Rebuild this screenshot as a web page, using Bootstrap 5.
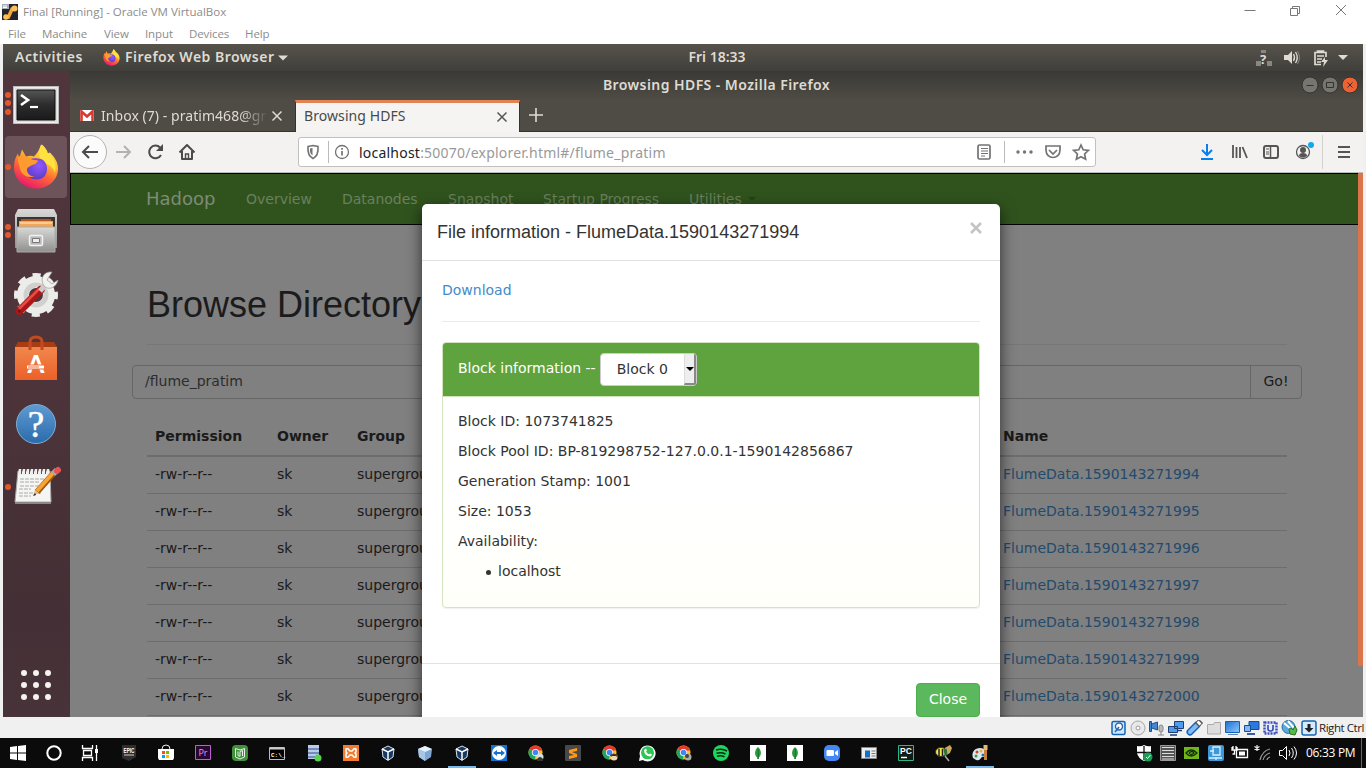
<!DOCTYPE html>
<html lang="en">
<head>
<meta charset="utf-8">
<title>Final [Running] - Oracle VM VirtualBox</title>
<link href="https://cdn.jsdelivr.net/npm/bootstrap@5.3.0/dist/css/bootstrap.min.css" rel="stylesheet">
<script src="https://cdn.jsdelivr.net/npm/bootstrap@5.3.0/dist/js/bootstrap.bundle.min.js" defer></script>
<style>
body{width:1366px;height:768px;overflow:hidden;background:#f0f0f0;font-family:"DejaVu Sans",sans-serif;font-size:14px;line-height:20px;color:#333}
svg{display:block;flex:none}
.seg{font-family:"Open Sans",sans-serif;font-size:12px;line-height:16px;color:#8c8c8c;white-space:nowrap}
.win-title{height:24px;background:#fff;padding-left:2px}
.win-title .seg{font-size:11.5px;letter-spacing:0;margin-left:5px}
.win-menu{height:20px;background:#fff;padding-left:8px}
.win-menu span{width:var(--w);font-size:11.5px;letter-spacing:-.1px}
.vm{margin:0 3px;height:673px;overflow:hidden;background:#808080}
.ub{font-family:"Noto Sans",sans-serif;font-weight:600;color:#dfdbd2;white-space:nowrap}
.topbar{height:27px;background:linear-gradient(#56534b,#403f3b);padding-left:12px;font-size:14px;line-height:18px}
.topbar span{padding-bottom:1px}
.dock{width:67px;height:646px;background:linear-gradient(#50363c,#4e353b 40%,#432f35 85%,#49333a)}
.dock-item{height:64px;width:67px}
.dock-item.on::before{content:"";position:absolute;left:2px;top:1px;width:62px;height:62px;border-radius:4px;background:#6c545a}
.dock-item svg{position:relative}
.ff-title{height:29px;background:linear-gradient(#3a3935,#4f4c45);font-size:14px;letter-spacing:.43px;padding-bottom:2px}
.tabs{height:32px;background:#4f4c45;border-bottom:1px solid #35332f;font-family:"Noto Sans",sans-serif;color:#dfdbd2}
.tab-active{width:225px;height:32px;background:#f5f4f3;border-top:3px solid #e28255;border-left:1px solid #35332f;border-right:1px solid #35332f;color:#494949;padding:0 11px 0 8px;letter-spacing:.08px}
.tab-active span{padding-bottom:2px}
.tab-idle{width:225px;padding-left:10px}
.fade-t{width:169px;white-space:nowrap;letter-spacing:.05px;-webkit-mask-image:linear-gradient(90deg,#000 82%,transparent 99%)}
.toolbar{height:41px;background:#f3f2f1;border-bottom:1px solid #bcbcbc}
.urlbar{width:798px;height:30px;background:#fff;border:1px solid #c2c0bd;border-radius:3px;font-family:"Noto Sans",sans-serif;font-size:14px;letter-spacing:.22px;color:#999}
.page{height:544px;width:1293px;background:#808080;overflow:hidden}
.hd-nav{height:52px;background:#30531e;border:1px solid #000;border-right:0;color:#69805d;padding-left:75px}
.hd-nav .brand{font-size:18px;color:#7e8b77;width:100px}
.wrap{width:1170px;margin-left:62px}
.hd-h1{font-family:"Liberation Sans",sans-serif;font-size:36px;line-height:40px;color:#1b1b1b;margin:60px 15px 0;padding-bottom:19px;border-bottom:1px solid #777;font-weight:400}
.path{height:34px;margin-top:20px;border:1px solid #666;border-radius:4px;color:#2c2c2c;padding-left:12px;line-height:30px}
.path .go{width:51px;border-left:1px solid #666;color:#1b1b1b;text-align:center}
.ftable{margin:17px 15px 0;width:1140px;table-layout:fixed;--bs-table-bg:transparent;--bs-table-color:#1a1a1a;color:#1a1a1a;border-color:#6f6f6f;white-space:nowrap}
.ftable th{height:40px;padding:7px 8px 9px;border-bottom:2px solid #6d6d6d;line-height:20px;color:#1a1a1a}
.ftable td{height:37px;padding:7px 8px 9px;border-bottom:1px solid #6d6d6d;line-height:20px;color:#1a1a1a}
.ftable td:last-child{color:#244a6c}
.sbar{right:0;top:0;width:5px;height:493px;background:#d9744b}
.dlg{left:352px;top:31px;width:578px;height:540px;background:#fff;border-radius:5px 5px 0 0;box-shadow:0 5px 15px rgba(0,0,0,.65)}
.dlg-head{height:57px;border-bottom:1px solid #e1e1e1;padding:0 17px 0 15px;font-family:"Liberation Sans",sans-serif;font-size:18px}
.dlg-body{height:403px;padding:19px 20px 0 20px;border-bottom:1px solid #e1e1e1}
.dlg hr{margin:21px 0 20px;border-top:1px solid #eaeaea;opacity:1}
.panel{border:1px solid #d3e3c0;border-radius:4px;height:266px;box-shadow:0 1px 1px rgba(0,0,0,.06);overflow:hidden;background:linear-gradient(#fff 60%,#fffffa)}
.panel-h{background:#5fa33e;height:54px;padding:10px 0 0 15px;color:#fff;border-bottom:1px solid #cfe3b8}
.panel-h > span{padding-top:5px}
.panel-b{padding:14px 15px}
.panel-b p{margin:0 0 10px}
.dotted::before{content:"";width:5px;height:5px;border-radius:50%;background:#333;margin:2px 7px 0 28px}
.sel{width:97px;height:33px;background:#fff;border:1px solid #ccc;border-radius:4px;color:#333;padding-left:16px}
.sel > span{padding-bottom:2px}
.sel i{width:12px;height:31px;background:#eee;border-right:2px solid #888;border-bottom:2px solid #888;border-left:1px solid #ddd;border-radius:0 2px 2px 0}
.sel i::after{content:"";position:absolute;left:1px;top:13px;border:4px solid transparent;border-top-color:#000;border-bottom:0}
.close-btn{width:64px;height:34px;margin:19px 20px;background:#5cb85c;border:1px solid #4cae4c;border-radius:4px;color:#fff;font-size:14px;line-height:20px;padding:0 0 2px}
.status{height:21px;background:#f0f0f0;padding-left:1110px}
.status .cell{width:19px}
.taskbar{height:30px;background:#0b0b0b}
.taskbar .cell{width:37px;height:30px}
.taskbar .cell.on::after{content:"";position:absolute;bottom:0;left:4px;width:28px;height:2px;background:#76b9ed}
.taskbar .c36{width:36px}
.taskbar .first{margin-left:3px}
</style>
</head>
<body>
<svg width="0" height="0" class="position-absolute">
<defs>
<linearGradient id="ffo" x1=".8" y1="0" x2=".3" y2="1"><stop offset="0" stop-color="#fff44f"/><stop offset=".35" stop-color="#ffbd30"/><stop offset=".6" stop-color="#ff6a35"/><stop offset="1" stop-color="#e9156b"/></linearGradient>
<radialGradient id="ffp" cx=".6" cy=".35" r=".7"><stop offset="0" stop-color="#9059ff"/><stop offset="1" stop-color="#5b3ac0"/></radialGradient>
<linearGradient id="term" x1="0" y1="0" x2="0" y2="1"><stop offset="0" stop-color="#555"/><stop offset=".5" stop-color="#2c2c2c"/><stop offset="1" stop-color="#1a1a1a"/></linearGradient>
<linearGradient id="silver" x1="0" y1="0" x2="0" y2="1"><stop offset="0" stop-color="#d9d9d7"/><stop offset="1" stop-color="#8f8f8d"/></linearGradient>
<linearGradient id="bag" x1="0" y1="0" x2="0" y2="1"><stop offset="0" stop-color="#f0874d"/><stop offset="1" stop-color="#ec6127"/></linearGradient>
<linearGradient id="help" x1="0" y1="0" x2="0" y2="1"><stop offset="0" stop-color="#5d9bd3"/><stop offset="1" stop-color="#2b6bab"/></linearGradient>
<linearGradient id="scr" x1="0" y1="0" x2="1" y2="1"><stop offset="0" stop-color="#1c6fd0"/><stop offset="1" stop-color="#8cc8ff"/></linearGradient>
<symbol id="firefox" viewBox="0 0 46 46">
<path d="M23 45C10 45 1 35 1 24c0-7 2-11 4-14l1 5 3-9 4 7c3-1 6-1 8 0 3-3 5-6 7-12 4 3 6 6 6 9l3-1c5 5 8 10 8 16 0 12-10 20-22 20z" fill="url(#ffo)"/>
<path d="M29 1c3 3 5 5 6 9 6 5 9 11 7 19-3-9-11-8-14-13-3-4-2-9 1-15z" fill="#ffe140"/>
<path d="M13 19c2-3 7-5 12-4 5 0 9 4 9 10 0 7-4 11-10 11-7 0-11-4-11-10z" fill="url(#ffp)"/>
<path d="M5 13c6-1 9 0 14 3l6 1c-1 4-5 4-7 5-2 2-4 1-4 5 1 4 4 6 8 6-8 2-14-2-15-8-1-5-3-7-2-12z" fill="#ff9a2e"/>
</symbol>
<symbol id="chrome" viewBox="0 0 16 16"><circle cx="7.5" cy="7.5" r="7" fill="#fbc116"/><path d="M7.5 7.500 1.4 4A7 7 0 0 1 13.600 4z" fill="#e33b2e"/><path d="M7.500 7.500 1.400 4A7 7 0 0 0 7 14.500z" fill="#1fa463"/><path d="M2 3.500h12v2H4z" fill="#e33b2e"/><circle cx="7.500" cy="7.500" r="3.600" fill="#fff"/><circle cx="7.500" cy="7.500" r="2.800" fill="#4285f4"/></symbol>
<symbol id="cube" viewBox="0 0 16 16"><path d="M8 1l6 3-1 8-5 3.500L3 12 2 4z" fill="#18385f" stroke="#d5e3f2"/><path d="M2 4l6 3 6-3M8 7v8" stroke="#fff" stroke-width="1.500" fill="none"/></symbol>
<symbol id="leaf" viewBox="0 0 16 16"><path fill="#fff" d="M0 0h16v16H0z"/><path d="M8 2c3.500 3 4 8 .8 10.500V14H7.200v-1.500C4 10 4.500 5 8 2z" fill="#2b9a3e"/><path d="M8.300 4v10" stroke="#11682a" stroke-width=".8"/></symbol>
</defs></svg>

<header class="win-title d-flex align-items-center">
<svg width="16" height="16"><path fill="#25252f" d="M0 0h16v16H0z"/><path d="M3.500 13h3l3.500-8h3" stroke="#f4a63b" stroke-width="3.500" fill="none"/><circle cx="12.500" cy="4.500" r="3" fill="#f9c15c"/><circle cx="4" cy="13" r="2.800" fill="#ffbf53"/><path d="M0 0h7v5H0z" fill="#a6b0b9"/><path d="M1 2h4M1 3.500h4" stroke="#fff"/></svg>
<span class="seg">Final [Running] - Oracle VM VirtualBox</span>
<svg class="ms-auto" width="122" height="24" fill="none" stroke="#777"><path d="M0.500 10.500h11M46.500 8.500h7v7h-7zM48.500 8V6.500h7v7H54M92 5l10 10M102 5l-10 10"/></svg>
</header>
<nav class="win-menu d-flex align-items-center"><span class="seg" style="--w:34px">File</span><span class="seg" style="--w:62px">Machine</span><span class="seg" style="--w:41px">View</span><span class="seg" style="--w:44px">Input</span><span class="seg" style="--w:56px">Devices</span><span class="seg">Help</span></nav>

<main class="vm">
<div class="topbar ub d-flex align-items-center position-relative">
<span style="width:88px;letter-spacing:.55px">Activities</span>
<svg width="17" height="17"><use href="#firefox"/></svg>
<span style="letter-spacing:.48px;margin-left:5px">Firefox Web Browser</span>
<svg class="ms-1" width="10" height="6"><path d="M0 .5h10L5 5.500z" fill="#dfdbd2"/></svg>
<span class="position-absolute start-50 translate-middle-x" style="margin-left:34px">Fri 18:33</span>
<svg class="ms-auto" style="margin-right:15px" width="92" height="20"><path d="M5 2h5v3H5zM0 13h5v5H0zM11 13h5v5h-5z" fill="#8a877f"/><text x="4" y="16" font-size="13" font-weight="700" fill="#dfdbd2">?</text><path d="M28 7h4l4-4v13l-4-4h-4z" fill="#dfdbd2"/><path d="M37.500 6q2 3.500 0 7M39.500 4q3.500 5.500 0 11" stroke="#dfdbd2" stroke-width="1.300" fill="none"/><path d="M41.500 3q4 6.500 0 13" stroke="#8a877f" fill="none"/><path d="M65 16.500h-6v-12h2.500V3h6v1.500H70V9M62 4.500h5M61 8h7M61 11h5M61 14h4" stroke="#dfdbd2" stroke-width="1.700" fill="none"/><path d="m69 9-4 5h3l-1 5 5-7h-3z" fill="#dfdbd2"/><path d="M82 7h10l-5 5z" fill="#dfdbd2"/></svg>
</div>
<div class="d-flex">
<aside class="dock d-flex flex-column">
<div class="dock-item"><svg width="67" height="64"><g fill="#e2582b"><circle cx="5" cy="24" r="3"/><circle cx="5" cy="32" r="3"/><circle cx="5" cy="41" r="3"/></g><path d="M10 15h46v38H10z" fill="#bbb"/><path d="M11.500 16.500h43v35h-43z" fill="#ddd" stroke="#eee"/><path d="M14 19h38v30H14z" fill="url(#term)" stroke="#111"/><path d="m18 24 7 5-7 5" fill="none" stroke="#fff" stroke-width="2.600"/><path d="M27 36h8" stroke="#fff" stroke-width="2.200"/></svg></div>
<div class="dock-item on position-relative d-flex"><svg width="67" height="64"><circle cx="5" cy="32" r="3" fill="#e2582b"/><use href="#firefox" x="10" y="8" width="46" height="47"/></svg></div>
<div class="dock-item"><svg width="67" height="64"><g fill="#e2582b"><circle cx="5" cy="28" r="3"/><circle cx="5" cy="36" r="3"/></g><path d="M15 10h36l3 6v33H12V16z" fill="url(#silver)"/><path d="M14 18h38v10H14z" fill="#3a3531"/><path d="M18 20h30v2H18z" fill="#b4551f"/><path d="M16 22h34v6H16z" fill="#f2a659"/><path d="M17 24h32" stroke="#fff0cf"/><path d="M14 28h38v25H14z" fill="url(#silver)" stroke="#aaa"/><rect x="26.500" y="36.500" width="13" height="10" rx="1.500" fill="#bbb" stroke="#f2f2f2" stroke-width="1.500"/><path d="M29.500 39.500h7v4h-7z" fill="#eee" stroke="#777"/></svg></div>
<div class="dock-item"><svg width="67" height="64"><circle cx="33" cy="32" r="13" fill="none" stroke="#ecece9" stroke-width="12"/><circle cx="33" cy="32" r="19.500" fill="none" stroke="#ecece9" stroke-width="5" stroke-dasharray="8 7.315" stroke-dashoffset="4"/><circle cx="33" cy="32" r="10" fill="none" stroke="#d0d0ce" stroke-width="5"/><path d="m16.500 48 21-21" stroke="#a81818" stroke-width="8" stroke-linecap="round"/><path d="m16 46 20-20" stroke="#ea4b43" stroke-width="2.500"/><path d="m37 28 7-8" stroke="#ccc" stroke-width="5"/><path d="M49 9c-7-1-12 5-9 12s13 5 15-4l-6 4-5-4z" fill="#f1f1ee" stroke="#999" stroke-width=".7"/><circle cx="16.500" cy="48" r="1.500" fill="#711"/></svg></div>
<div class="dock-item"><svg width="67" height="64"><path d="m12 20 3-5h36l3 5z" fill="#a83d14"/><path d="M12 20h42v33H12z" fill="url(#bag)"/><path d="M27 23v-8q0-5 6-5t6 5v8" fill="none" stroke="#c34a20" stroke-width="3"/><text x="33" y="46" text-anchor="middle" font-family="Lato" font-size="24" font-weight="900" fill="#fff">A</text><path d="M22 40h22" stroke="#ee6f37" stroke-width="5"/><path d="M24 40h17" stroke="#fff" stroke-width="3"/><path d="M25 40h11" stroke="#ee6f37"/></svg></div>
<div class="dock-item"><svg width="67" height="64"><circle cx="33" cy="33" r="19.500" fill="url(#help)" stroke="#82acd1"/><text x="33" y="46" text-anchor="middle" font-family="Liberation Serif" font-size="37" fill="#fff" stroke="#fff" stroke-width=".5">?</text></svg></div>
<div class="dock-item"><svg width="67" height="64"><circle cx="5" cy="32" r="3" fill="#e2582b"/><path d="M15 16h32l1 31H12z" fill="#f5f5f3" stroke="#aaa"/><path d="M12 47h36v2H12z" fill="#888"/><path d="M17 14v6M21 14v6M25 14v6M29 14v6M33 14v6M37 14v6M41 14v6M45 14v6" stroke="#eee" stroke-width="2.500"/><path d="M18.500 15v4M22.500 15v4M26.500 15v4M30.500 15v4M34.500 15v4M38.500 15v4M42.500 15v4" stroke="#555"/><path d="M17 24h26M17 27h20M17 31h24M16 34h12M16 38h22M16 41h12" stroke="#aaa" stroke-dasharray="4 1"/><path d="m34 37 16-18" stroke="#9d560b" stroke-width="6"/><path d="m34 36 16-18" stroke="#f9a332" stroke-width="4"/><path d="m50 19 4-4" stroke="#aaa" stroke-width="6"/><path d="m54 16 1-1" stroke="#ea5252" stroke-width="6" stroke-linecap="round"/><path d="m30 41 2-6 4 3z" fill="#e6bd88"/><path d="m30 41 2-3 1 2z" fill="#222"/></svg></div>
<svg class="mt-auto" width="67" height="63"><g fill="#f5f2f0"><circle cx="21" cy="19" r="3"/><circle cx="33" cy="19" r="3"/><circle cx="45" cy="19" r="3"/><circle cx="21" cy="31" r="3"/><circle cx="33" cy="31" r="3"/><circle cx="45" cy="31" r="3"/><circle cx="21" cy="43" r="3"/><circle cx="33" cy="43" r="3"/><circle cx="45" cy="43" r="3"/></g></svg>
</aside>

<section>
<div class="ff-title ub d-flex align-items-center justify-content-center position-relative" style="width:1293px"><span>Browsing HDFS - Mozilla Firefox</span>
<svg class="position-absolute end-0 top-0" width="66" height="29" viewBox="-10 0 66 29"><g stroke="#34332f"><circle cx="3" cy="14" r="8" fill="#777570"/><circle cx="23" cy="14" r="8" fill="#777570"/><circle cx="43" cy="14" r="8" fill="#ee6134"/></g><path d="M-.5 14.500h7M19.500 11.500h7v5h-7zM40.500 11.500l5 5M45.500 11.500l-5 5" stroke="#33322f" fill="none"/></svg></div>
<div class="tabs d-flex align-items-center">
<div class="tab-idle d-flex align-items-center"><svg width="14" height="11"><path fill="#fff" d="M0 0h14v11H0z"/><path d="M1.500 11V1.500L7 6.500l5.500-5V11" stroke="#d93a2f" stroke-width="2.600" fill="none"/></svg><span class="fade-t" style="margin-left:7px">Inbox (7) - pratim468@gr</span><svg width="12" height="12" class="ms-auto me-2"><path d="m1.500 1.500 9 9m0-9-9 9" stroke="#dfdbd2" stroke-width="1.500"/></svg><i class="me-1"></i></div>
<div class="tab-active d-flex align-items-center justify-content-between"><span>Browsing HDFS</span><svg width="12" height="12"><path d="m1.500 1.500 9 9m0-9-9 9" stroke="#555" stroke-width="1.500"/></svg></div>
<svg style="margin-left:7px" width="18" height="16"><path d="M9 0v14M2 7h14" stroke="#dfdbd2" stroke-width="1.600"/></svg>
</div>
<div class="toolbar d-flex align-items-center">
<svg width="228" height="40" fill="none" stroke="#4b4b4b" stroke-width="2"><circle cx="20" cy="20" r="16.500" fill="#fbfbfb" stroke="#b5b3b0" stroke-width="1"/><path d="M28 20H13m6-6-6 6 6 6"/><path d="M46 20h14m-6-6 6 6-6 6" stroke="#b2b2b2"/><path d="M91 23a6.300 6.300 0 1 1-1-7.500"/><path d="M93 12v7h-7z" fill="#4b4b4b" stroke="none"/><path d="m109.500 20.500 7.500-7.500 7.500 7.500M112 19v8h10v-8" stroke-linejoin="round"/><path d="M115.500 22h3v5h-3z" stroke-width="1.400"/></svg>
<div class="urlbar d-flex align-items-center">
<svg width="60" height="28" fill="none" stroke="#737373"><path d="M9 8.500q5-1 5-1 0 0 5 1c.5 6-1 10-5 12-4-2-5.500-6-5-12z" stroke-width="1.600"/><path d="M13.500 10v7.500q-3-2-2.500-7z" fill="#737373" stroke="none"/><path d="M29.500 3v22" stroke="#bbb"/><circle cx="43" cy="14" r="6.500" stroke-width="1.300"/><path d="M43 13v4.500M43 10v1.700" stroke-width="1.700"/></svg>
<span class="flex-grow-1" style="padding-top:1px"><span style="color:#222">localhost</span>:50070/explorer.html#/flume_pratim</span>
<svg width="121" height="28" fill="none" stroke="#737373" stroke-width="1.700"><rect x="4" y="7" width="12" height="14" rx="1.500"/><path d="M7 10.500h7M7 13h7M7 15.500h7M7 18h4" stroke-width="1"/><path d="M30.500 3v22" stroke="#bbb" stroke-width="1"/><g fill="#737373" stroke="none"><circle cx="44" cy="14" r="1.700"/><circle cx="50.500" cy="14" r="1.700"/><circle cx="57" cy="14" r="1.700"/></g><path d="M72 8h14v4c0 10-14 10-14 0zM75 12l4 4 4-4"/><path d="m107 7 2.200 4.800 5.200.6-3.800 3.600 1 5.200-4.600-2.500-4.600 2.500 1-5.200-3.800-3.600 5.200-.6z"/></svg>
</div>
<svg class="ms-auto" width="166" height="40" fill="none" stroke="#555" stroke-width="2"><path d="M10 12v11m-5-5 5 5 5-5M4 27h12" stroke="#0a7df0"/><path d="M36 13v13M39.500 15v11M43 15v11M45.500 15l4.500 11" stroke-width="1.800"/><rect x="67" y="14" width="14" height="12" rx="2"/><path d="M73.500 14v12" stroke-width="1.500"/><path d="M69 17h3M69 20h3M69 22h3" stroke-width="1"/><circle cx="106" cy="20" r="6.500" stroke-width="1.300"/><circle cx="106" cy="18" r="3" fill="#555" stroke="none"/><path d="M102 24q0-3 4-3t4 3q-4 3-8 0z" fill="#555" stroke="none"/><circle cx="114" cy="13" r="3" fill="#10a9ed" stroke="none"/><path d="M125.500 3v34" stroke="#d2d1d0" stroke-width="1"/><path d="M141 15h12M141 20h12M141 25h12"/></svg>
</div>

<div class="page position-relative">
<nav class="hd-nav d-flex align-items-center"><span class="brand">Hadoop</span><span style="width:96px">Overview</span><span style="width:106px">Datanodes</span><span style="width:95px">Snapshot</span><span style="width:146px">Startup Progress</span><span>Utilities</span><svg style="margin-left:6px" width="8" height="4"><path d="M0 0h8L4 4z" fill="#23431a"/></svg></nav>
<div class="wrap">
<h1 class="hd-h1">Browse Directory</h1>
<div class="path d-flex justify-content-between"><span>/flume_pratim</span><span class="go">Go!</span></div>
<table class="table ftable">
<colgroup><col style="width:122px"><col style="width:80px"><col style="width:646px"><col></colgroup>
<thead><tr><th>Permission</th><th>Owner</th><th>Group</th><th>Name</th></tr></thead>
<tbody>
<tr><td>-rw-r--r--</td><td>sk</td><td>supergroup</td><td>FlumeData.1590143271994</td></tr>
<tr><td>-rw-r--r--</td><td>sk</td><td>supergroup</td><td>FlumeData.1590143271995</td></tr>
<tr><td>-rw-r--r--</td><td>sk</td><td>supergroup</td><td>FlumeData.1590143271996</td></tr>
<tr><td>-rw-r--r--</td><td>sk</td><td>supergroup</td><td>FlumeData.1590143271997</td></tr>
<tr><td>-rw-r--r--</td><td>sk</td><td>supergroup</td><td>FlumeData.1590143271998</td></tr>
<tr><td>-rw-r--r--</td><td>sk</td><td>supergroup</td><td>FlumeData.1590143271999</td></tr>
<tr><td>-rw-r--r--</td><td>sk</td><td>supergroup</td><td>FlumeData.1590143272000</td></tr>
</tbody></table>
</div>
<div class="sbar position-absolute"></div>
<div class="dlg position-absolute">
<div class="dlg-head d-flex align-items-center justify-content-between"><span>File information - FlumeData.1590143271994</span><svg class="mb-2" width="14" height="14"><path d="m2 2 10 10m0-10L2 12" stroke="#c4c4c4" stroke-width="2.600"/></svg></div>
<div class="dlg-body">
<span class="d-block" style="color:#428bca">Download</span>
<hr>
<div class="panel">
<div class="panel-h d-flex align-items-start"><span>Block information --</span><div class="sel ms-1 d-flex align-items-center justify-content-between"><span>Block 0</span><i class="position-relative"></i></div></div>
<div class="panel-b"><p>Block ID: 1073741825</p><p>Block Pool ID: BP-819298752-127.0.0.1-1590142856867</p><p>Generation Stamp: 1001</p><p>Size: 1053</p><p>Availability:</p><ul class="list-unstyled mb-0"><li class="dotted d-flex align-items-center">localhost</li></ul></div>
</div>
</div>
<div class="d-flex justify-content-end"><button class="btn close-btn">Close</button></div>
</div>
</div>
</section>
</div>
</main>

<footer>
<div class="status d-flex align-items-center">
<svg class="cell" height="16"><rect x="2" y="1.500" width="13" height="13" rx="1.500" fill="#cfe6fc" stroke="#1565b4" stroke-width="1.500"/><circle cx="9" cy="6.500" r="3.500" fill="#fff" stroke="#2868b0" stroke-width="1.400"/><path d="m5 12 4-5" stroke="#2868b0" stroke-width="1.600"/></svg>
<svg class="cell" height="16"><circle cx="9" cy="8" r="7" fill="#e9e9e9" stroke="#a5a5a5"/><circle cx="9" cy="8" r="2" fill="#fff" stroke="#999"/></svg>
<svg class="cell" height="16"><path d="M1.500 1.500h2v10h-2zM3.500 4l6-2v8l-6-2z" fill="#4587d0" stroke="#1d5292"/><rect x="11" y="5" width="4" height="7" rx="2" fill="#bbb" stroke="#888"/><path d="M13 12v3M10 15h6" stroke="#888"/></svg>
<svg class="cell" height="16"><path d="M7.500 1.500h9v7h-9zM1.500 6.500h9v6h-9z" fill="#4e9cef" stroke="#203e70"/><path d="M10 10.500h5M3 15h7" stroke="#203e70" stroke-width="1.500"/></svg>
<svg class="cell" height="16"><path d="m4 12 7-7" stroke="#1963b5" stroke-width="7" stroke-linecap="round"/><path d="m4 12 7-7" stroke="#7dbbf5" stroke-width="4" stroke-linecap="round"/><path d="m11 5 4-4" stroke="#555" stroke-width="6"/><path d="m12 4 2-2" stroke="#fff" stroke-width="4"/></svg>
<svg class="cell" height="16"><path d="M2.500 14V4.500h6l1-2h6V14z" fill="#ddd" stroke="#aaa"/></svg>
<svg class="cell" height="16"><path d="M1.500 1.500h14v11h-14z" fill="url(#scr)" stroke="#1a5eb4"/><path d="M4 14.500h10" stroke="#5b86b6"/></svg>
<svg class="cell" height="16"><path d="M6 1.500h10v8H6z" fill="#2d79db" stroke="#194b91"/><path d="M1.500 5.500h6v6h-6z" fill="#7fb6f5" stroke="#194b91"/><path d="M4 14h8" stroke="#3b59a9" stroke-width="2"/></svg>
<svg class="cell" height="16"><path d="M2.500 2.500h12v11h-12z" fill="#e4eaff" stroke="#4051b5" stroke-width="2.500" stroke-dasharray="2 1"/><path d="M6 5v4q0 2 2.500 2T11 9V5" fill="none" stroke="#3648ab" stroke-width="1.600"/></svg>
<svg class="cell" height="16"><circle cx="7.500" cy="7" r="6.500" fill="#58a9dc" stroke="#2a6ba3"/><path d="m3 3 8 7M7 1l6 7" stroke="#fff" stroke-width="2"/><path d="m8 9 2-1 2 2 2-4 2 4-2 5-5-1z" fill="#58b947" stroke="#266f22"/></svg>
<svg class="cell" height="16"><rect x="2" y="1" width="14" height="14" rx="2" fill="#d6eaff" stroke="#1665af" stroke-width="1.500"/><path d="M7.500 4h3v4h3L9 12.500 4.500 8h3z" fill="#222"/></svg>
<span class="seg" style="color:#222;font-size:11.500px;letter-spacing:-.45px">Right Ctrl</span>
</div>

<div class="taskbar d-flex align-items-center">
<svg class="cell c36" viewBox="0 0 36 30"><path d="m10 9 7-1v6.500h-7zM18 8l8-1v7.500h-8zM10 15.500h7V22l-7-1zM18 15.500h8V23l-8-1z" fill="#fff"/></svg>
<svg class="cell c36" viewBox="0 0 36 30"><circle cx="18" cy="15" r="6.700" fill="none" stroke="#fff" stroke-width="2"/></svg>
<svg class="cell c36" viewBox="0 0 36 30"><path d="M10.500 7v3.500h10V7M11.500 12.500h8v5h-8zM10.500 23v-3.500h10V23M24.500 7v16" stroke="#fff" stroke-width="1.300" fill="none"/><path d="M23 11h3v4h-3z" fill="#fff"/></svg>
<svg class="cell first" viewBox="1 0 37 30"><path d="M12 7h14v12l-7 4-7-3z" fill="#2e2e2e"/><text x="19" y="15" font-family="Liberation Sans" font-size="8" font-weight="700" fill="#fff" text-anchor="middle" textLength="11" lengthAdjust="spacingAndGlyphs">EPIC</text><path d="M14 17h10" stroke="#ccc"/></svg>
<svg class="cell" viewBox="1 0 37 30"><path d="M11 11h16v9l-1 2H12l-1-2z" fill="#fff"/><path d="M15 11q0-4 4-4t4 4" stroke="#eee" fill="none"/><path d="M15 13h3v3h-3z" fill="#f25022"/><path d="M19 13h3v3h-3z" fill="#7fba00"/><path d="M15 17h3v3h-3z" fill="#00a4ef"/><path d="M19 17h3v3h-3z" fill="#ffb900"/></svg>
<svg class="cell" viewBox="1 0 37 30"><path d="M11.500 7.500h15v14h-15z" fill="#2a0634" stroke="#bd5fd2"/><text x="19" y="18" font-family="Open Sans" font-size="9" fill="#e19af0" text-anchor="middle">Pr</text></svg>
<svg class="cell" viewBox="1 0 37 30"><rect x="11" y="7" width="16" height="16" rx="4" fill="#3f913c"/><path d="m14.500 10.500 4.500 1.500 4.500-1.500v8.500l-4.500 2-4.500-2zM17 13.500v4l2 1v-5l2.500-1v5.500" fill="none" stroke="#eee"/></svg>
<svg class="cell" viewBox="1 0 37 30"><path d="M11.500 9.500h15v12h-15z" fill="#000" stroke="#bbb"/><path d="M12 10.500h14" stroke="#ccc" stroke-width="2"/><text x="13" y="19" font-family="Liberation Mono" font-weight="700" font-size="6" fill="#fff">C:\_</text></svg>
<svg class="cell" viewBox="1 0 37 30"><path d="M13 7h11v14H13z" fill="#bccbe8"/><path d="M13 11h11M13 15h11M13 19h11" stroke="#5978ad" stroke-width="1.500"/><circle cx="23" cy="20" r="3.500" fill="#57d34a"/></svg>
<svg class="cell" viewBox="1 0 37 30"><path d="M11 7h16v16H11z" fill="#ee7d31"/><path d="M14 11q2-1 3 1l1 1h2l1-1q1-2 3-1v3l-1 1 1 1v3q-2 1-3-1l-1-1h-2l-1 1q-1 2-3 1v-3l1-1-1-1z" fill="none" stroke="#fff" stroke-width="1.500"/></svg>
<svg class="cell" viewBox="1 0 37 30"><use href="#cube" x="11" y="7" width="16" height="16"/></svg>
<svg class="cell" viewBox="1 0 37 30"><path d="m19 8 7 3-1 8-6 4-6-4-1-8z" fill="#7fa6d0"/><path d="m12 11 7 3 7-3-7-3z" fill="#e7f2fc"/><path d="m12 11 7 3v9l-6-4z" fill="#a8c6e5"/></svg>
<div class="cell on position-relative"><svg width="37" height="30" viewBox="1 0 37 30"><use href="#cube" x="11" y="7" width="16" height="16"/></svg></div>
<svg class="cell" viewBox="1 0 37 30"><path d="M11 7h16v16H11z" fill="#1473d1"/><circle cx="19" cy="15" r="7" fill="#fff"/><path d="M13 15l4-3v2h4v-2l4 3-4 3v-2h-4v2z" fill="#1473d1"/></svg>
<svg class="cell" viewBox="1 0 37 30"><use href="#chrome" x="11" y="7" width="16" height="16"/><circle cx="23" cy="19" r="3.500" fill="#d8dadd"/><path d="M20 21q3-4 6 0v2h-6z" fill="#333"/></svg>
<svg class="cell" viewBox="1 0 37 30"><rect x="11" y="7" width="16" height="16" rx="1" fill="#484848"/><path d="m15 12 8-2v3l-5 1 5 2v3l-8 2v-3l5-1-5-2z" fill="#ff9b12"/></svg>
<svg class="cell" viewBox="1 0 37 30"><use href="#chrome" x="11" y="7" width="16" height="16"/><circle cx="23" cy="19" r="3.500" fill="#ecd7bb"/><path d="M19.500 18q3-3 7 0" stroke="#5a3927" stroke-width="2"/></svg>
<svg class="cell" viewBox="1 0 37 30"><path d="m11 23 1-5a8 8 0 1 1 3 4z" fill="#fff"/><circle cx="19.500" cy="14.800" r="6.500" fill="#2bc653"/><path d="M16 12q0 6 7 6.500l1-2-2-1-1 1q-2-1-3-3l1-1-1-2z" fill="#fff"/></svg>
<svg class="cell" viewBox="1 0 37 30"><use href="#chrome" x="11" y="7" width="16" height="16"/><circle cx="23" cy="19" r="3.500" fill="#aaa"/><circle cx="22" cy="18" r="2" fill="#444"/></svg>
<svg class="cell" viewBox="1 0 37 30"><circle cx="19" cy="15" r="8" fill="#1ed760"/><path d="M14 12q6-2 11 1M14.500 15.300q5-1.500 9 .7M15 18.300q4-1.300 7.500.6" stroke="#0b2b14" stroke-width="1.600" fill="none"/></svg>
<svg class="cell" viewBox="1 0 37 30"><use href="#leaf" x="11" y="7" width="16" height="16"/></svg>
<svg class="cell" viewBox="1 0 37 30"><use href="#leaf" x="11" y="7" width="16" height="16"/></svg>
<svg class="cell" viewBox="1 0 37 30"><rect x="11" y="7" width="16" height="16" rx="5" fill="#4388f3"/><rect x="13.500" y="12" width="7.500" height="6" rx="1" fill="#fff"/><path d="m22 14 3-2v6l-3-2z" fill="#fff"/></svg>
<svg class="cell" viewBox="1 0 37 30"><path d="M11.500 9.500h15v11h-15z" fill="#eee" stroke="#888"/><path d="M15 12.500h5v7h-5z" fill="#1173c7"/><path d="M21.500 13h4M21.500 15.500h4M21.500 18h4" stroke="#777"/></svg>
<svg class="cell" viewBox="1 0 37 30"><path d="M11.500 7.500h15v15h-15z" fill="#111b17" stroke="#2bb883"/><text x="13" y="16" font-family="Liberation Sans" font-size="8.500" font-weight="700" fill="#fff">PC</text><path d="M14 19.500h6" stroke="#fff" stroke-width="1.500"/></svg>
<svg class="cell" viewBox="1 0 37 30"><path d="m19 11 7-4 2 3-2 5-5 3z" fill="#caa75a"/><ellipse cx="17" cy="14" rx="5.500" ry="4.500" fill="#f2e44b" stroke="#333"/><path d="M15 11v7M18.500 11v7" stroke="#222" stroke-width="1.500"/><path d="m21 11 1 6" stroke="#24753e" stroke-width="3"/><path d="m21 18 4 5" stroke="#aaa" stroke-width="1.500"/></svg>
<div class="cell on position-relative"><svg width="37" height="30" viewBox="1 0 37 30"><path d="M12 20c-2-6 2-10 7-10s8 4 6 8c-2 2-4 0-5 2s-3 4-8 0z" fill="#d8e8f0"/><circle cx="15" cy="18" r="1.500" fill="#3a9d45"/><circle cx="16" cy="14" r="1.500" fill="#d3442f"/><circle cx="20" cy="13" r="1.500" fill="#e6b62f"/><circle cx="22" cy="17" r="1.500" fill="#2868bb"/><path d="M24.500 7v15" stroke="#c8803d" stroke-width="3"/><path d="M24.500 7v5" stroke="#e6b77b" stroke-width="4"/></svg></div>
<svg class="ms-auto" width="170" height="30" fill="none"><path d="M11 7q4 2 7 1v7q-1 5-7 8-6-3-7-8V8q4 1 7-1z" fill="#fff"/><path d="M11 8v14M4 14.500h14" stroke="#111" stroke-width="1.300"/><circle cx="15" cy="19" r="4.500" fill="#1c9d55"/><path d="m13 19 1.500 1.500L17.500 17" stroke="#fff"/><path d="M27.500 7.500h15v15h-15z" fill="#555" stroke="#999"/><path d="M29 9.500h12M29 12.500h12M29 15.500h12M29 18.500h12M29 21h12" stroke="#ddd"/><path d="M51 9h15v12H51z" fill="#71b71b"/><path d="M53 15q5-6 11 0-6 6-11 0zM56 15q3-3 5 0-3 3-5 0" stroke="#18320b" stroke-width="1.300"/><rect x="75" y="7" width="16" height="16" rx="2" fill="#3b98da"/><path d="M80 9h7v8h-7zM76 20h13M77 13h4M83 19v3" stroke="#d9eef9" stroke-width="1.300"/><path d="M103.500 11.500h11v8h-11zM99 9v3h5V9M101.500 12v4h-2M100 8v3M103 8v3" stroke="#fff" stroke-width="1.300"/><path d="M106 13.500h6v4h-6z" fill="#fff"/><path d="M127 22q2-9 10-11M130 22q1-5 7-7M134 22q0-2 3-3" stroke="#999" stroke-width="1.200"/><path d="M124 7v6M121.500 8.500l5 3M126.500 8.500l-5 3" stroke="#eee" stroke-width="1.200"/><path d="M146.500 12.500h3l4-4v13l-4-4h-3z" stroke="#fff"/><path d="M156 12q2 3 0 6M158.500 10q3.500 5 0 10M161 8.500q5 6.500 0 13" stroke="#fff"/></svg>
<span class="seg" style="width:55px;color:#fff;letter-spacing:-.3px;margin-left:3px">06:33 PM</span><span style="width:5px;height:30px;border-left:1px solid #666"></span>
</div>
</footer>
</body>
</html>
